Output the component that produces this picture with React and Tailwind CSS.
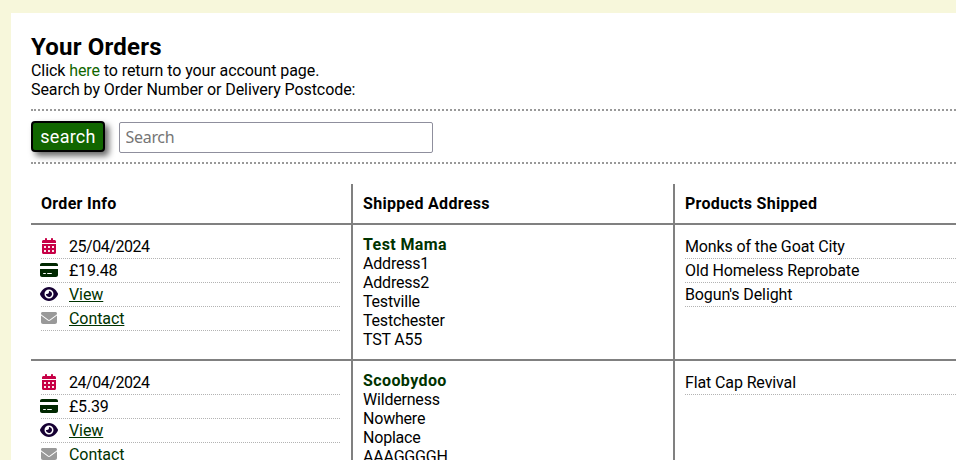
import { FaCalendarDays, FaCreditCard, FaEye, FaEnvelope } from "react-icons/fa6";

const orders = [
  {
    date: "25/04/2024",
    total: "£19.48",
    name: "Test Mama",
    address: ["Address1", "Address2", "Testville", "Testchester", "TST A55"],
    products: ["Monks of the Goat City", "Old Homeless Reprobate", "Bogun's Delight"],
  },
  {
    date: "24/04/2024",
    total: "£5.39",
    name: "Scoobydoo",
    address: ["Wilderness", "Nowhere", "Noplace", "AAAGGGGH", "TST A55"],
    products: ["Flat Cap Revival"],
  },
];

function Item({ icon, children }) {
  return (
    <li className="flex h-6 items-center border-b border-dotted border-[#b3b3b3]">
      {icon && (
        <span className="-ml-0.5 mr-2.5 flex w-5 shrink-0 justify-center self-start pt-[3px]">{icon}</span>
      )}
      <span className="leading-[19px]">{children}</span>
    </li>
  );
}

function Order({ order }) {
  return (
    <div className="grid h-[136px] grid-cols-[322px_322px_1fr] border-t-2 border-[#808080]">
      <ul className="border-r-2 border-[#808080] py-2.5 pr-[11px] pl-2.5">
        <Item icon={<FaCalendarDays className="h-4 w-3.5 text-[#c70046]" />}>
          <span className="tracking-[-0.45px]">{order.date}</span>
        </Item>
        <Item icon={<FaCreditCard className="h-4 w-[18px] text-[#002800]" />}>
          <span className="tracking-[-0.2px]">{order.total}</span>
        </Item>
        <Item icon={<FaEye className="h-4 w-[18px] text-[#160033]" />}>
          <a href="#" className="text-[#003300] underline">View</a>
        </Item>
        <Item icon={<FaEnvelope className="h-4 w-4 text-[#999999]" />}>
          <a href="#" className="text-[#003300] underline">Contact</a>
        </Item>
      </ul>
      <div className="border-r-2 border-[#808080] p-2.5 leading-[19px] tracking-[-0.2px]">
        <p className="font-bold tracking-[0.4px] text-[#003300]">{order.name}</p>
        {order.address.map((line) => (
          <p key={line}>{line}</p>
        ))}
      </div>
      <ul className="p-2.5 pr-0 tracking-[-0.12px]">
        {order.products.map((p) => (
          <Item key={p}>{p}</Item>
        ))}
      </ul>
    </div>
  );
}

export default function App() {
  return (
    <div className="h-[460px] overflow-hidden bg-[#f7f7db] pt-[13px] pl-[11px] font-['Roboto',sans-serif] text-base tracking-[-0.08px] text-black">
      <main className="min-h-[460px] bg-white pt-5 pl-5">
        <h1 className="text-2xl leading-7 font-bold tracking-[0.2px]">Your Orders</h1>
        <p className="leading-[19px]">
          Click <a href="#" className="text-[#116600]">here</a> to return to your account page.
        </p>
        <p className="leading-[19px]">Search by Order Number or Delivery Postcode:</p>
        <form className="mt-2.5 flex h-[55px] items-start border-y-2 border-dotted border-[#999999] pt-2.5">
          <button
            type="button"
            className="h-[31px] w-[74px] rounded-[4px] border-2 border-black bg-[#116600] text-lg leading-none tracking-[0.25px] text-white shadow-[4px_4px_6px_rgba(0,0,0,0.6)]"
          >
            search
          </button>
          <input
            placeholder="Search"
            className="mt-px ml-3.5 h-[31px] w-[314px] rounded-[2px] border border-[#8f8f9d] bg-white px-[5.5px] pb-0.5 font-['Noto_Sans',sans-serif] text-base tracking-[-0.3px] placeholder:text-[#757575]"
          />
        </form>
        <div className="mt-5">
          <div className="grid h-[39px] grid-cols-[322px_322px_1fr] font-bold leading-[19px] tracking-[0.3px]">
            <div className="border-r-2 border-[#808080] p-2.5">Order Info</div>
            <div className="border-r-2 border-[#808080] p-2.5">Shipped Address</div>
            <div className="p-2.5">Products Shipped</div>
          </div>
          {orders.map((o) => (
            <Order key={o.date} order={o} />
          ))}
        </div>
      </main>
    </div>
  );
}
